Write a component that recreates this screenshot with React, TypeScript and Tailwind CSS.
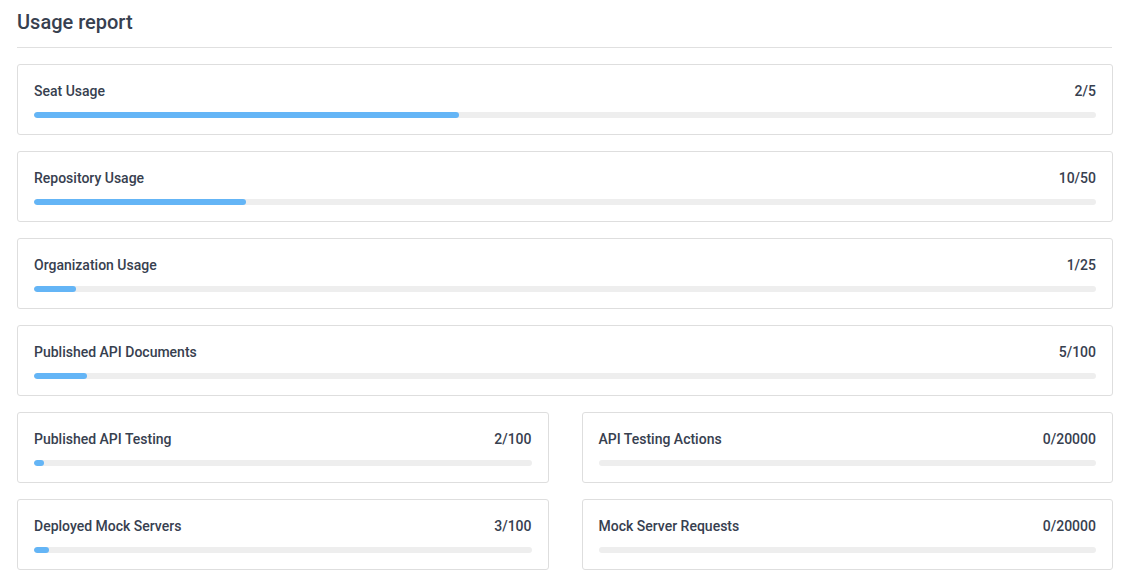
import React from 'react';

interface Usage {
  label: string;
  used: number;
  total: number;
}

const full: Usage[] = [
  { label: 'Seat Usage', used: 2, total: 5 },
  { label: 'Repository Usage', used: 10, total: 50 },
  { label: 'Organization Usage', used: 1, total: 25 },
  { label: 'Published API Documents', used: 5, total: 100 },
];

const half: Usage[] = [
  { label: 'Published API Testing', used: 2, total: 100 },
  { label: 'API Testing Actions', used: 0, total: 20000 },
  { label: 'Deployed Mock Servers', used: 3, total: 100 },
  { label: 'Mock Server Requests', used: 0, total: 20000 },
];

const UsageCard: React.FC<{ item: Usage }> = ({ item }) => (
  <div className="border border-[#dedede] rounded-[3px] bg-white px-4 pt-4 pb-4">
    <div className="flex justify-between text-sm font-medium text-[#37404f] leading-5">
      <span>{item.label}</span>
      <span>
        {item.used}/{item.total}
      </span>
    </div>
    <div className="mt-[11px] h-[6px] rounded-full bg-[#eeeeee] overflow-hidden">
      <div
        className="h-full rounded-full bg-[#64b5f6]"
        style={{ width: `${(item.used / item.total) * 100}%` }}
      />
    </div>
  </div>
);

export default function App() {
  return (
    <div className="px-[17px] bg-white min-h-screen text-[#37404f]" style={{ fontFamily: 'Roboto, sans-serif' }}>
      <h1 className="text-xl font-medium leading-7 pt-2 pb-[11px] border-b border-[#e0e0e0]">Usage report</h1>
      <div className="flex flex-col gap-4 mt-4 w-[1096px]">
        {full.map((u) => (
          <UsageCard key={u.label} item={u} />
        ))}
        <div className="grid grid-cols-2 gap-x-[33px] gap-y-4">
          {half.map((u) => (
            <UsageCard key={u.label} item={u} />
          ))}
        </div>
      </div>
    </div>
  );
}
